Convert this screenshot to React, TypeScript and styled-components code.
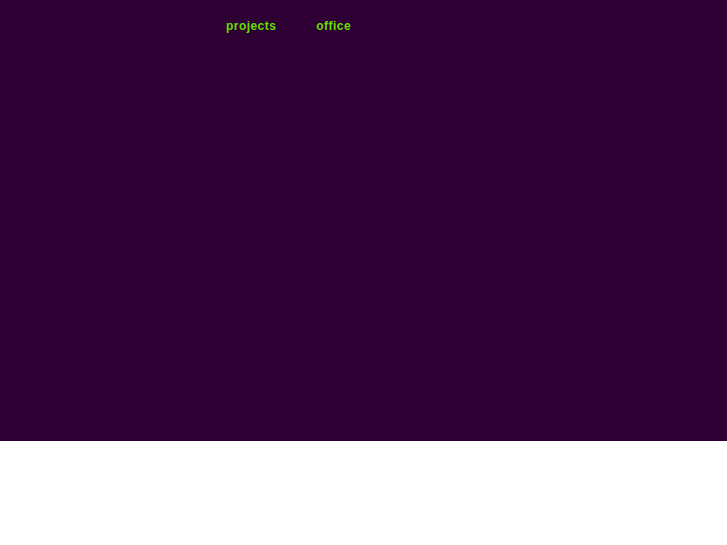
import React from "react";
import styled, { createGlobalStyle } from "styled-components";

const Global = createGlobalStyle`
  html, body { margin: 0; padding: 0; background: #ffffff; }
  body { font-family: "Liberation Sans", Arial, sans-serif; }
`;

const Hero = styled.header`
  height: 441px;
  background: #2e0033;
  box-sizing: border-box;
  padding: 19px 0 0 226px;
`;

const Nav = styled.nav`
  display: flex;
  gap: 40px;
`;

const NavLink = styled.a`
  color: #66dd00;
  font-weight: 700;
  font-size: 12px;
  letter-spacing: 0.45px;
  line-height: 15px;
  text-decoration: none;
`;

export default function App() {
  return (
    <>
      <Global />
      <Hero>
        <Nav>
          <NavLink href="#">projects</NavLink>
          <NavLink href="#">office</NavLink>
        </Nav>
      </Hero>
    </>
  );
}
